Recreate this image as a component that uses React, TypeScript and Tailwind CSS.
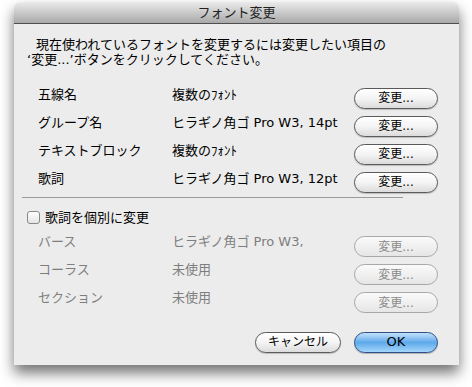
import React from "react";

const font = { fontFamily: '"Lucida Grande", "DejaVu Sans", "Noto Sans CJK JP", sans-serif' };

function AquaButton({ label, disabled = false, primary = false, w = "w-[84px]" }: { label: string; disabled?: boolean; primary?: boolean; w?: string }) {
  if (primary) {
    return (
      <button className={`${w} h-[21px] rounded-full border border-[#2d4f86] bg-gradient-to-b from-[#c2e1fb] via-[#5ea9ea] to-[#a3d6fb] text-[13px] text-black shadow-[0_1px_1px_rgba(0,0,0,0.25)] flex items-center justify-center`}>
        {label}
      </button>
    );
  }
  return (
    <button
      className={`${w} h-[21px] rounded-full border flex items-center justify-center text-[12px] ${
        disabled
          ? "border-[#a8a8a8] bg-gradient-to-b from-[#fafafa] to-[#e6e6e6] text-[#8a8a8a]"
          : "border-[#5a5a5a] bg-gradient-to-b from-white via-[#f4f4f4] to-[#dcdcdc] text-black shadow-[0_1px_1px_rgba(0,0,0,0.2)]"
      }`}
    >
      {label}
    </button>
  );
}

const rows = [
  { name: "五線名", value: "複数のﾌｫﾝﾄ" },
  { name: "グループ名", value: "ヒラギノ角ゴ Pro W3, 14pt" },
  { name: "テキストブロック", value: "複数のﾌｫﾝﾄ" },
  { name: "歌詞", value: "ヒラギノ角ゴ Pro W3, 12pt" },
];

const subRows = [
  { name: "バース", value: "ヒラギノ角ゴ Pro W3," },
  { name: "コーラス", value: "未使用" },
  { name: "セクション", value: "未使用" },
];

export default function App() {
  return (
    <div className="w-[472px] h-[387px] bg-white overflow-hidden pt-[2px] pl-[14px]" style={font}>
      <div className="w-[445px] h-[363px] rounded-t-[6px] shadow-[0_8px_14px_rgba(0,0,0,0.55)] flex flex-col overflow-hidden">
        {/* title bar */}
        <div className="h-[22px] shrink-0 bg-gradient-to-b from-[#ebebeb] to-[#a9a9a9] border-b border-[#4e4e4e] flex items-center justify-center text-[13px] text-[#222]">
          フォント変更
        </div>

        <div className="flex-1 bg-[#ececec] pl-[13px] pr-[21px] pt-[13px] text-[13px] text-black">
          <p className="leading-[15px] text-[13px] indent-[9px]">
            現在使われているフォントを変更するには変更したい項目の
            <br />
            ‘変更...’ボタンをクリックしてください。
          </p>

          <div className="mt-[17px] flex flex-col">
            {rows.map((r) => (
              <div key={r.name} className="h-[28px] flex items-center">
                <span className="w-[145px] pl-[11px] -mt-[6px]">{r.name}</span>
                <span className="flex-1 -mt-[6px]">{r.value}</span>
                <AquaButton label="変更..." />
              </div>
            ))}
          </div>

          <div className="mt-[1px] -ml-[5px] w-[381px] h-px bg-[#9a9a9a]" />

          <div className="mt-[10px] flex items-center gap-[5px]">
            <span className="w-[13px] h-[13px] rounded-[3px] border border-[#888] bg-gradient-to-b from-white to-[#e4e4e4]" />
            <span>歌詞を個別に変更</span>
          </div>

          <div className="mt-[5px] flex flex-col text-[#7e7e7e]">
            {subRows.map((r) => (
              <div key={r.name} className="h-[28px] flex items-center">
                <span className="w-[145px] pl-[11px] -mt-[9px]">{r.name}</span>
                <span className="flex-1 -mt-[9px]">{r.value}</span>
                <AquaButton label="変更..." disabled />
              </div>
            ))}
          </div>

          <div className="mt-[15px] flex justify-end gap-[13px]">
            <AquaButton label="キャンセル" w="w-[86px]" />
            <AquaButton label="OK" primary />
          </div>
        </div>
      </div>
    </div>
  );
}
